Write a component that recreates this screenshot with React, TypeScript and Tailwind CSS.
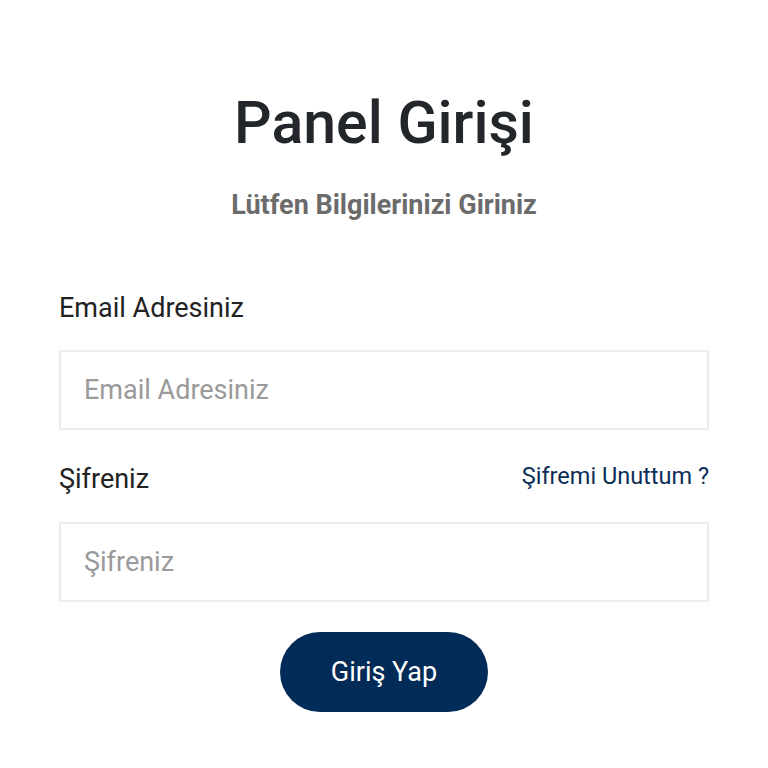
import { useState } from 'react'

export default function App() {
  const [email, setEmail] = useState('')
  const [password, setPassword] = useState('')

  return (
    <div className="min-h-screen bg-white font-['Roboto',sans-serif]">
      <div className="px-[59px] pt-[93px]">
        <h1 className="text-center text-[59px] leading-none font-medium text-[#23262b]">
          Panel Girişi
        </h1>
        <p className="mt-[40px] text-center text-[27px] leading-none font-bold text-[#6b6b6b]">
          Lütfen Bilgilerinizi Giriniz
        </p>

        <form className="mt-[76px]" onSubmit={(e) => e.preventDefault()}>
          <label className="block text-[27px] leading-none text-[#222222]">Email Adresiniz</label>
          <input
            type="email"
            value={email}
            onChange={(e) => setEmail(e.target.value)}
            placeholder="Email Adresiniz"
            className="mt-[28px] block h-[80px] w-full border-2 border-[#ececec] px-[23px] text-[27px] text-[#222222] outline-none placeholder:text-[#9a9a9a]"
          />

          <div className="mt-[35px] flex items-start justify-between">
            <label className="mt-[1px] block text-[27px] leading-none text-[#222222]">Şifreniz</label>
            <a href="#" className="text-[23.5px] leading-none text-[#0b2e59]">
              Şifremi Unuttum ?
            </a>
          </div>
          <input
            type="password"
            value={password}
            onChange={(e) => setPassword(e.target.value)}
            placeholder="Şifreniz"
            className="mt-[29px] block h-[80px] w-full border-2 border-[#ececec] px-[23px] text-[27px] text-[#222222] outline-none placeholder:text-[#9a9a9a]"
          />

          <div className="mt-[30px] flex justify-center">
            <button
              type="submit"
              className="h-[80px] w-[208px] rounded-full bg-[#032b57] text-[27px] text-white"
            >
              Giriş Yap
            </button>
          </div>
        </form>
      </div>
    </div>
  )
}
